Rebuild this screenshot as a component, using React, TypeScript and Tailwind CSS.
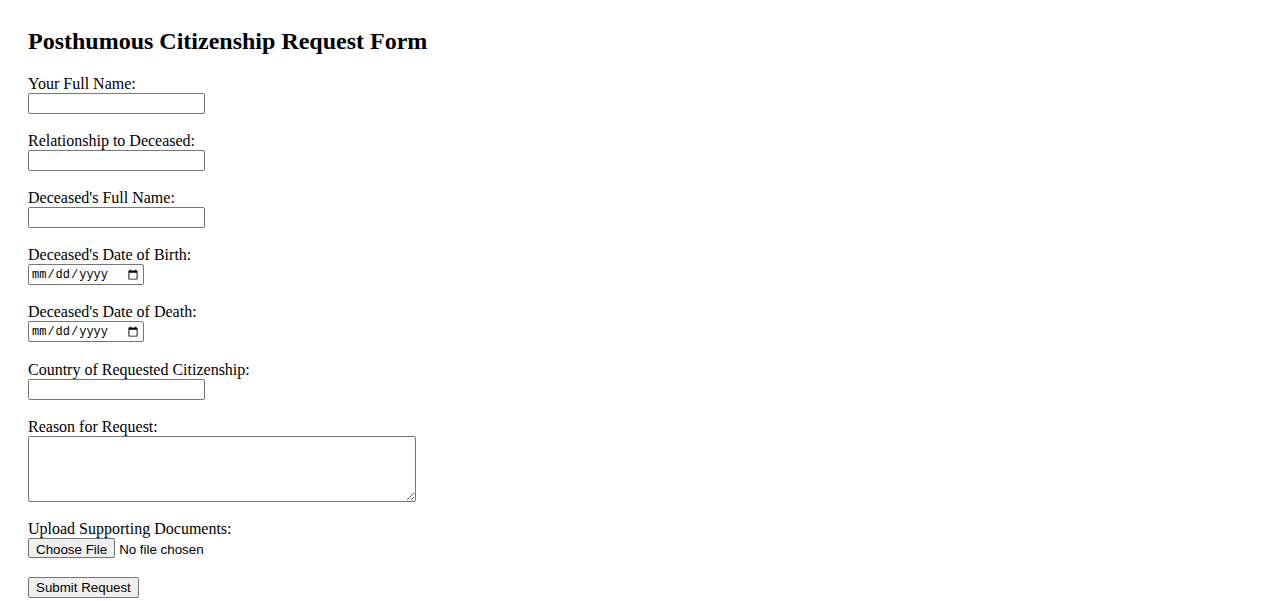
const fields = [
  { label: "Your Full Name:", type: "text", gap: "mb-[17px]" },
  { label: "Relationship to Deceased:", type: "text", gap: "mb-[17px]" },
  { label: "Deceased's Full Name:", type: "text", gap: "mb-[17px]" },
  { label: "Deceased's Date of Birth:", type: "date", gap: "mb-[17px]" },
  { label: "Deceased's Date of Death:", type: "date", gap: "mb-[18px]" },
  { label: "Country of Requested Citizenship:", type: "text", gap: "mb-[17px]" },
];

export default function App() {
  return (
    <main className="min-h-screen bg-white px-[28px] pt-[27px] font-['Liberation_Serif',serif] text-[16px] text-black">
      <h2 className="text-[24px] font-bold leading-[28px]">Posthumous Citizenship Request Form</h2>

      <form className="mt-[19px] flex flex-col items-start" onSubmit={(e) => e.preventDefault()}>
        {fields.map((field) => (
          <div key={field.label} className={`flex flex-col items-start ${field.gap}`}>
            <label className="leading-[19px]">{field.label}</label>
            {field.type === "date" ? (
              <input
                type="date"
                className="h-[21px] w-[116px] rounded-[2px] border border-[#767676] bg-white px-[2px] font-['Liberation_Mono',monospace] text-[12px] text-black"
              />
            ) : (
              <input
                type="text"
                className="h-[21px] w-[177px] rounded-[2px] border border-[#767676] bg-white px-[2px] font-['Liberation_Sans',sans-serif] text-[13px]"
              />
            )}
          </div>
        ))}

        <div className="mb-[17px] flex flex-col items-start">
          <label className="leading-[19px]">Reason for Request:</label>
          <textarea className="h-[66px] w-[388px] rounded-[2px] border border-[#767676] bg-white px-[2px] font-['Liberation_Mono',monospace] text-[13px]" />
        </div>

        <div className="mb-[18px] flex flex-col items-start">
          <label className="leading-[19px]">Upload Supporting Documents:</label>
          <input
            type="file"
            className="h-[21px] font-['Liberation_Sans',sans-serif] text-[13.33px] leading-[21px] file:mr-[4px] file:h-[20px] file:rounded-[2px] file:border file:border-[#767676] file:bg-[#efefef] file:px-[7px] file:text-black"
          />
        </div>

        <button
          type="submit"
          className="h-[21px] rounded-[2px] border border-[#767676] bg-[#efefef] px-[7px] font-['Liberation_Sans',sans-serif] text-[13.33px] leading-[17px] text-black"
        >
          Submit Request
        </button>
      </form>
    </main>
  );
}
